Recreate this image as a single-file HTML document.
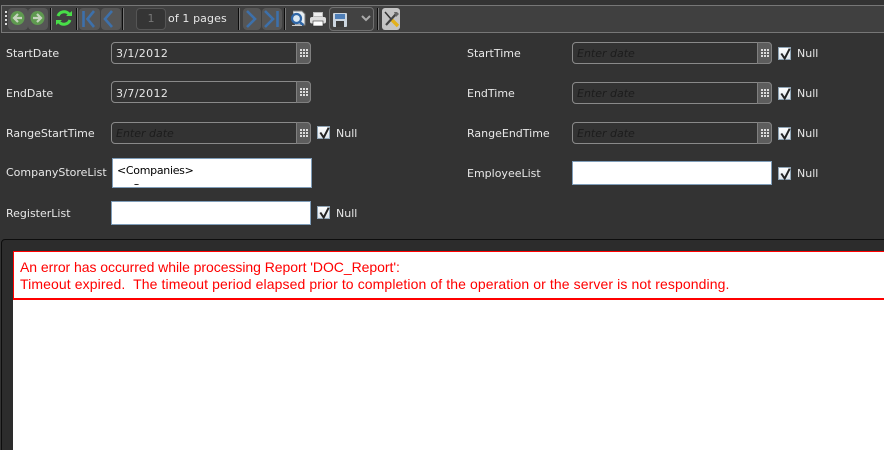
<!DOCTYPE html>
<html><head><meta charset="utf-8">
<style>
html,body{margin:0;padding:0;width:884px;height:450px;overflow:hidden;background:#333}
#w{position:relative;width:884px;height:450px;overflow:hidden;background:#333;font-family:"DejaVu Sans","Liberation Sans",sans-serif;font-size:11px;color:#e8e8e8}
.a{position:absolute}
#tb{left:1px;top:5px;width:883px;height:26px;background:#404040;border:1px solid #777;border-right:0}
.sep{position:absolute;top:8px;width:1px;height:22px;background:#0c0c0c;border-right:1px solid #777}
.ib{position:absolute;top:8px;width:20px;height:22px;background:#565656;border-radius:4px}
.lb{position:absolute;white-space:nowrap;line-height:14px}
.dp{position:absolute;width:200px;height:22px;box-sizing:border-box;border:1px solid #8a8a8a;border-radius:4px;background:#333}
.dp span{position:absolute;left:4px;top:4px;line-height:14px;white-space:nowrap;letter-spacing:.35px}
.dp i{color:#1c1c1c;font-size:11px;letter-spacing:0}
.dp b{position:absolute;right:-1px;top:-1px;width:15px;height:22px;background:#5d5d5d;border:1px solid #808080;border-radius:0 4px 4px 0;box-sizing:border-box}
.dp svg{position:absolute;left:3px;top:6px}
.chk{position:absolute;width:13px;height:13px;background:linear-gradient(#fff,#dde4ea);border:1px solid #8fa4b5;box-sizing:border-box}
.chk svg{position:absolute;left:0;top:-2px;overflow:visible}
.wh{position:absolute;background:#fff;border:1px solid #7f9db9;box-sizing:border-box}
</style></head>
<body><div id="w">
<div id="tb" class="a"></div>
<svg class="a" style="left:5px;top:11px" width="3" height="16"><g fill="#ddd"><rect x="0" y="0" width="2" height="2"/><rect x="0" y="4" width="2" height="2"/><rect x="0" y="8" width="2" height="2"/><rect x="0" y="12" width="2" height="2"/></g></svg>
<div class="ib" style="left:8px"></div><div class="ib" style="left:28px"></div>
<svg class="a" style="left:8px;top:9px" width="40" height="18">
<circle cx="9.5" cy="9" r="7" fill="#5f9a50"/><path d="M14 9H6.5M10 5 6 9 10 13" fill="none" stroke="#c5d4bd" stroke-width="2.2"/>
<circle cx="29.5" cy="9" r="7" fill="#5f9a50"/><path d="M25 9h7.5M29 5 33 9 29 13" fill="none" stroke="#c5d4bd" stroke-width="2.2"/></svg>
<div class="sep" style="left:50px"></div>
<svg class="a" style="left:55px;top:9px" width="18" height="18"><path d="M3 7A6.5 6.5 0 0 1 14 5M15 11A6.5 6.5 0 0 1 4 13" fill="none" stroke="#48de48" stroke-width="3"/><path d="M11 7h6V2zM7 11H1v5z" fill="#48de48"/></svg>
<div class="sep" style="left:76px"></div>
<div class="ib" style="left:79px;width:21px"></div><div class="ib" style="left:101px;width:20px"></div>
<svg class="a" style="left:76px;top:8px" width="46" height="22"><g fill="none" stroke="#3d70aa" stroke-width="2.6"><path d="M7.5 3v16"/><path d="M18 3 11.5 11 18 19"/><path d="M36 3 29 11 36 19"/></g></svg>
<div class="sep" style="left:122px"></div>
<div class="a" style="left:136px;top:8px;width:30px;height:22px;box-sizing:border-box;background:#353535;border:1px solid #555;border-radius:4px;color:#777;text-align:center;line-height:20px">1</div>
<div class="lb" style="left:168px;top:12px;letter-spacing:.1px">of 1 pages</div>
<div class="sep" style="left:238px"></div>
<div class="ib" style="left:243px;width:18px"></div><div class="ib" style="left:262px"></div>
<svg class="a" style="left:240px;top:8px" width="44" height="22"><g fill="none" stroke="#3d70aa" stroke-width="2.6"><path d="M7 3l8 8-8 8"/><path d="M25 3l8 8-8 8"/><path d="M37.5 3v16"/></g></svg>
<div class="sep" style="left:284px"></div>
<svg class="a" style="left:289px;top:10px" width="18" height="18"><path d="M4 1h9l3 3v11H6" fill="#e8eef2" stroke="#777"/><circle cx="7.5" cy="8.5" r="4.5" fill="#dbe8f2" stroke="#2f66a6" stroke-width="2.2"/><path d="M10.5 12l4 3" stroke="#2f66a6" stroke-width="2.4"/><path d="M3 15h10v1H3z" fill="#ccc"/></svg>
<svg class="a" style="left:309px;top:10px" width="18" height="18"><rect x="4.5" y="2.5" width="9" height="4" fill="#eee" stroke="#bbb"/><rect x="1" y="7" width="16" height="6.5" rx="2" fill="#ddd"/><rect x="4" y="11" width="10" height="5" fill="#fff" stroke="#333" stroke-width=".6"/></svg>
<div class="a" style="left:329px;top:7px;width:45px;height:24px;box-sizing:border-box;border:1px solid #6f6f6f;border-radius:4px;background:#424242"></div>
<svg class="a" style="left:333px;top:13px" width="15" height="15"><rect x="0" y="0" width="14" height="14" rx="1" fill="#ccd6e0"/><rect x="2" y="1" width="10" height="5" fill="#4f7fb8"/><rect x="3" y="8" width="8" height="6" fill="#3c3c3c"/></svg>
<svg class="a" style="left:361px;top:15px" width="10" height="7"><path d="M1 1l4 4 4-4" fill="none" stroke="#aaa" stroke-width="2"/></svg>
<div class="sep" style="left:377px"></div>
<div class="a" style="left:382px;top:8px;width:18px;height:22px;background:#c4c4c4;border-radius:3px"></div>
<svg class="a" style="left:382px;top:10px" width="18" height="18"><path d="M3 2l6 7" stroke="#333" stroke-width="1.5"/><path d="M9 9l7 7" stroke="#e3b11c" stroke-width="3.4"/><path d="M14 4 4 15" stroke="#444" stroke-width="2.2"/><path d="M12 2h3l2 2-3 3z" fill="#666"/></svg>

<div class="lb" style="left:6px;top:47px">StartDate</div>
<div class="lb" style="left:6px;top:87px">EndDate</div>
<div class="lb" style="left:6px;top:127px">RangeStartTime</div>
<div class="lb" style="left:6px;top:166px">CompanyStoreList</div>
<div class="lb" style="left:6px;top:207px">RegisterList</div>
<div class="lb" style="left:467px;top:47px">StartTime</div>
<div class="lb" style="left:467px;top:87px">EndTime</div>
<div class="lb" style="left:467px;top:127px">RangeEndTime</div>
<div class="lb" style="left:467px;top:167px">EmployeeList</div>

<div class="dp" style="left:111px;top:42px"><span>3/1/2012</span><b><svg width="8" height="8" fill="#ddd"><path d="M0 0h2v2H0zM3 0h2v2H3zM6 0h2v2H6zM0 3h2v2H0zM3 3h2v2H3zM6 3h2v2H6zM0 6h2v2H0zM3 6h2v2H3zM6 6h2v2H6z"/></svg></b></div>
<div class="dp" style="left:111px;top:81px"><span style="top:5px">3/7/2012</span><b><svg width="8" height="8" fill="#ddd"><path d="M0 0h2v2H0zM3 0h2v2H3zM6 0h2v2H6zM0 3h2v2H0zM3 3h2v2H3zM6 3h2v2H6zM0 6h2v2H0zM3 6h2v2H3zM6 6h2v2H6z"/></svg></b></div>
<div class="dp" style="left:111px;top:122px"><span><i>Enter date</i></span><b><svg width="8" height="8" fill="#ddd"><path d="M0 0h2v2H0zM3 0h2v2H3zM6 0h2v2H6zM0 3h2v2H0zM3 3h2v2H3zM6 3h2v2H6zM0 6h2v2H0zM3 6h2v2H3zM6 6h2v2H6z"/></svg></b></div>
<div class="dp" style="left:572px;top:42px"><span><i>Enter date</i></span><b><svg width="8" height="8" fill="#ddd"><path d="M0 0h2v2H0zM3 0h2v2H3zM6 0h2v2H6zM0 3h2v2H0zM3 3h2v2H3zM6 3h2v2H6zM0 6h2v2H0zM3 6h2v2H3zM6 6h2v2H6z"/></svg></b></div>
<div class="dp" style="left:572px;top:82px"><span><i>Enter date</i></span><b><svg width="8" height="8" fill="#ddd"><path d="M0 0h2v2H0zM3 0h2v2H3zM6 0h2v2H6zM0 3h2v2H0zM3 3h2v2H3zM6 3h2v2H6zM0 6h2v2H0zM3 6h2v2H3zM6 6h2v2H6z"/></svg></b></div>
<div class="dp" style="left:572px;top:122px"><span><i>Enter date</i></span><b><svg width="8" height="8" fill="#ddd"><path d="M0 0h2v2H0zM3 0h2v2H3zM6 0h2v2H6zM0 3h2v2H0zM3 3h2v2H3zM6 3h2v2H6zM0 6h2v2H0zM3 6h2v2H3zM6 6h2v2H6z"/></svg></b></div>

<div class="wh" style="left:112px;top:158px;width:200px;height:30px;color:#000"><div style="position:absolute;left:4px;top:5px;width:190px;height:21px;overflow:hidden;line-height:14px;white-space:nowrap;letter-spacing:-.3px">&lt;Companies&gt;<br><span style="position:relative;top:4px;margin-left:15px">C</span></div></div>
<div class="wh" style="left:111px;top:201px;width:200px;height:24px"></div>
<div class="wh" style="left:572px;top:161px;width:200px;height:24px"></div>

<div class="chk" style="left:317px;top:126px"><svg width="13" height="13"><path d="M2.3 7.5l3.4 5 5-9.8" fill="none" stroke="#222" stroke-width="2"/></svg></div>
<div class="lb" style="left:336px;top:127px">Null</div>
<div class="chk" style="left:317px;top:206px"><svg width="13" height="13"><path d="M2.3 7.5l3.4 5 5-9.8" fill="none" stroke="#222" stroke-width="2"/></svg></div>
<div class="lb" style="left:336px;top:207px">Null</div>
<div class="chk" style="left:778px;top:47px"><svg width="13" height="13"><path d="M2.3 7.5l3.4 5 5-9.8" fill="none" stroke="#222" stroke-width="2"/></svg></div>
<div class="lb" style="left:797px;top:47px">Null</div>
<div class="chk" style="left:778px;top:87px"><svg width="13" height="13"><path d="M2.3 7.5l3.4 5 5-9.8" fill="none" stroke="#222" stroke-width="2"/></svg></div>
<div class="lb" style="left:797px;top:87px">Null</div>
<div class="chk" style="left:778px;top:127px"><svg width="13" height="13"><path d="M2.3 7.5l3.4 5 5-9.8" fill="none" stroke="#222" stroke-width="2"/></svg></div>
<div class="lb" style="left:797px;top:127px">Null</div>
<div class="chk" style="left:778px;top:167px"><svg width="13" height="13"><path d="M2.3 7.5l3.4 5 5-9.8" fill="none" stroke="#222" stroke-width="2"/></svg></div>
<div class="lb" style="left:797px;top:167px">Null</div>

<div class="a" style="left:1px;top:239px;width:890px;height:220px;box-sizing:border-box;background:#2c2c2c;border:1px solid #0d0d0d;border-radius:4px 0 0 0"></div>
<div class="a" style="left:13px;top:251px;width:871px;height:199px;background:#fff"></div>
<div class="a" style="left:13px;top:251px;width:871px;height:49px;box-sizing:border-box;border:1px solid #f00;border-right:0;border-bottom-width:2px;color:#f00;font-family:'Liberation Sans',sans-serif;font-size:14px;line-height:17px;padding:7px 0 0 6px;white-space:pre"><span style="letter-spacing:-.05px">An error has occurred while processing Report 'DOC_Report':</span>
<span style="letter-spacing:.1px">Timeout expired.  The timeout period elapsed prior to completion of the operation or the server is not responding.</span></div>
</div></body></html>
